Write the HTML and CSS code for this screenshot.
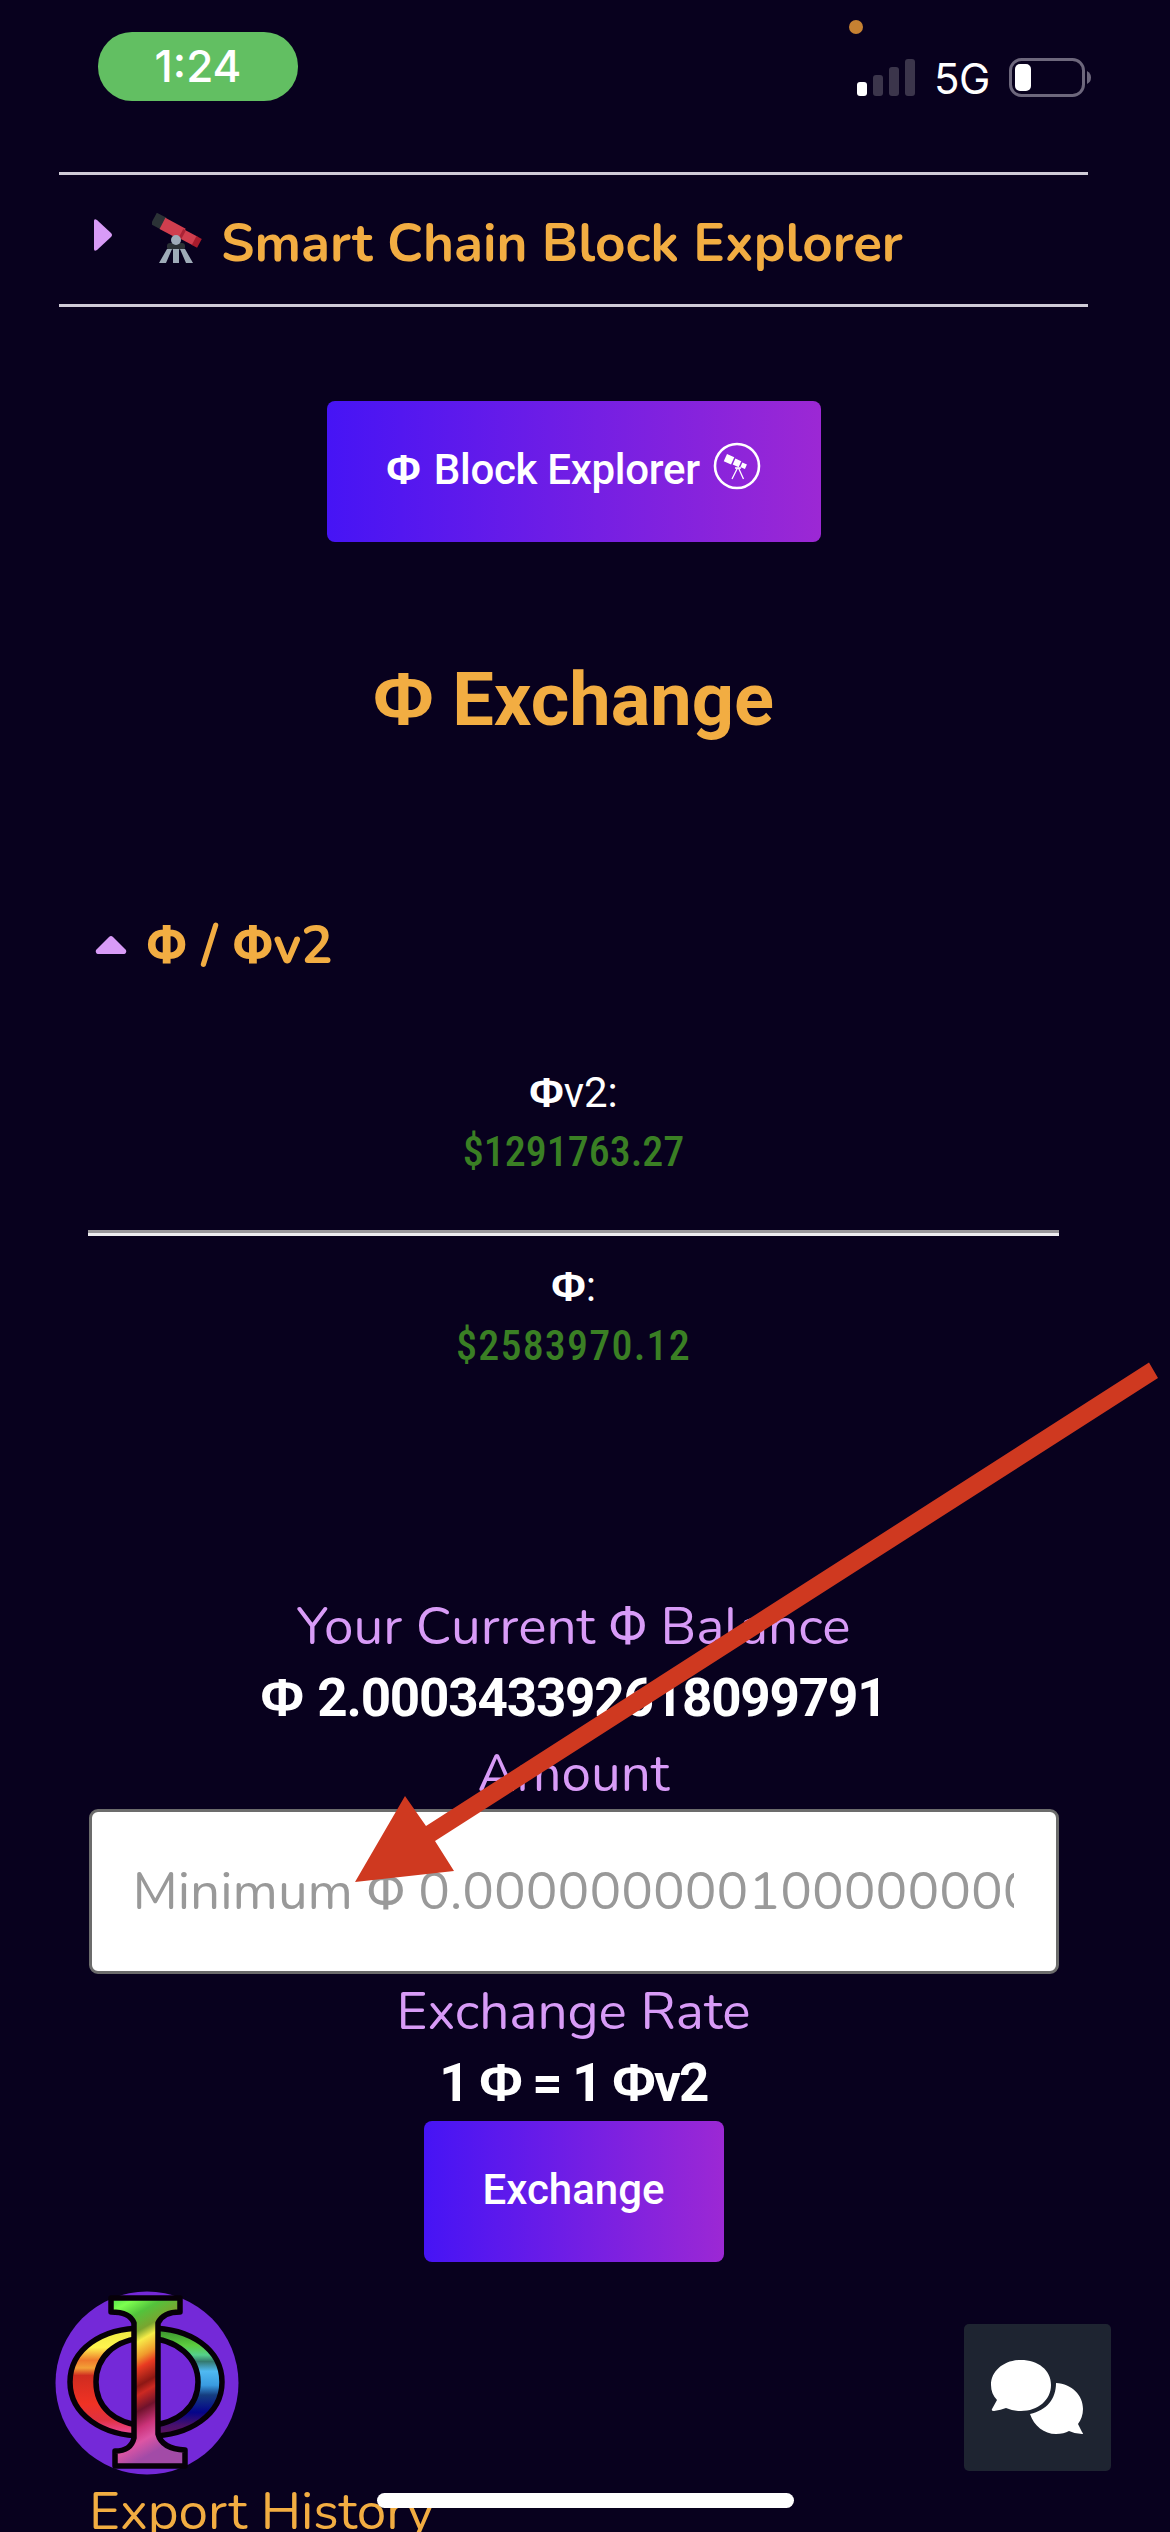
FILE: index.html
```html
<!DOCTYPE html>
<html lang="en">
<head>
<meta charset="utf-8">
<title>Φ Exchange</title>
<link rel="stylesheet" href="styles.css">
</head>
<body>
<div class="screen">
  <header class="status">
    <div class="time">1:24</div>
    <div class="indicators">
      <i class="mic"></i>
      <svg class="signal" width="58" height="38" viewBox="0 0 58 38">
        <rect x="0" y="23" width="10" height="14" rx="3" fill="#fff"/>
        <g fill="#3b354b"><rect x="16" y="16" width="10" height="21" rx="3"/><rect x="32" y="8" width="10" height="29" rx="3"/><rect x="48" y="0" width="10" height="37" rx="3"/></g>
      </svg>
      <span class="network">5G</span>
      <svg class="battery" width="83" height="40" viewBox="0 0 83 40">
        <rect x="1.5" y="1.5" width="73" height="36" rx="11" fill="none" stroke="#6d677c" stroke-width="3"/>
        <rect x="6" y="6" width="16" height="27" rx="5" fill="#fff"/>
        <path d="M78 13q4 2 4 6.500t-4 6.500z" fill="#6d677c"/>
      </svg>
    </div>
  </header>

  <main>
    <section class="accordion">
      <svg class="caret" width="20" height="34" viewBox="0 0 20 34"><path d="M1 3Q1 0 4 2L18 15Q20 17 18 19L4 32Q1 34 1 31Z" fill="#d89bf7"/></svg>
      <svg class="scope" width="52" height="52" viewBox="0 0 52 52">
        <g transform="translate(2 6) rotate(28)">
          <rect x="0" y="-6" width="11" height="13" fill="#2b3236"/>
          <rect x="10" y="-5.500" width="23" height="12.500" fill="#d03e4e"/>
          <rect x="32" y="-4" width="15" height="10" fill="#d03e4e"/>
          <rect x="31" y="-4" width="3" height="10" fill="#a92335"/>
          <rect x="46" y="-4" width="6" height="10" fill="#a71b2c"/>
        </g>
        <rect x="15" y="31" width="18" height="7" rx="3" fill="#2b3236"/>
        <circle cx="24" cy="28" r="5" fill="#9eabb8"/>
        <path d="M15 37h5l-6 14H7zM21 37h6v14h-6zM28 37h5l8 14h-7z" fill="#9eabb8"/>
      </svg>
      <h2>Smart Chain Block Explorer</h2>
    </section>

    <button class="btn btn-explorer"><b>Φ</b><span>Block Explorer</span>
      <svg width="48" height="48" viewBox="0 0 48 48">
        <circle cx="24" cy="24" r="22" fill="none" stroke="#fff" stroke-width="2.600"/>
        <g transform="translate(14 12) rotate(24)" fill="#fff"><rect width="8" height="8"/><rect x="9.500" y=".8" width="6.500" height="6.500"/><rect x="17.500" y="1.500" width="5" height="5"/></g>
        <path d="M22 26h6M24.500 26l-5.500 11M25.500 26l5 11" stroke="#fff" stroke-width="1.300" fill="none"/>
      </svg>
    </button>

    <h1><b>Φ</b> Exchange</h1>

    <div class="panel">
      <div class="pair">
        <svg width="32" height="18" viewBox="0 0 32 18"><path d="M14 1Q16 -1 18 1L31 14Q32 18 28 18H4Q0 18 1 14Z" fill="#d89bf7"/></svg>
        <h2>Φ / Φv2</h2>
      </div>
      <p class="price first"><b>Φ</b><span class="version">v2:</span></p>
      <p class="price usd">$1291763.27</p>
      <hr>
      <p class="price"><b>Φ</b>:</p>
      <p class="price usd wide">$2583970.12</p>

      <p class="label balance">Your Current Φ Balance</p>
      <p class="value"><b>Φ</b> <span class="digits">2.000343392618099791</span></p>
      <p class="label amount">Amount</p>
      <input type="text" placeholder="Minimum Φ 0.000000000100000000" aria-label="Amount">
      <p class="label rate">Exchange Rate</p>
      <p class="value ratio">1 <b>Φ</b> = 1 <b>Φ</b>v2</p>
      <button class="btn btn-exchange">Exchange</button>
      <p class="export">Export History</p>
    </div>
  </main>

  <svg class="logo" width="190" height="190" viewBox="0 0 190 190">
    <defs>
      <linearGradient id="stem" x1="0" y1="0" x2="0.250" y2="1"><stop offset="0" stop-color="#4fe04b"/><stop offset=".08" stop-color="#7cff4f"/><stop offset=".17" stop-color="#53c33c"/><stop offset=".27" stop-color="#7aa52f"/><stop offset=".33" stop-color="#f7ec49"/><stop offset=".42" stop-color="#f09a2c"/><stop offset=".48" stop-color="#e93b22"/><stop offset=".58" stop-color="#8d1714"/><stop offset=".63" stop-color="#cc2922"/><stop offset=".72" stop-color="#70122c"/><stop offset=".82" stop-color="#cb3379"/><stop offset=".9" stop-color="#dd55a4"/><stop offset="1" stop-color="#a24ba7"/></linearGradient>
      <linearGradient id="left" x1="0" y1="0" x2="0" y2="1"><stop offset="0" stop-color="#ece942"/><stop offset=".18" stop-color="#fff44d"/><stop offset=".3" stop-color="#ef792c"/><stop offset=".37" stop-color="#f3a137"/><stop offset=".44" stop-color="#cf2c20"/><stop offset=".7" stop-color="#f03224"/><stop offset=".85" stop-color="#e03140"/><stop offset="1" stop-color="#ee4cac"/></linearGradient>
      <linearGradient id="right" x1="0" y1="0" x2="0" y2="1"><stop offset="0" stop-color="#358a2b"/><stop offset=".16" stop-color="#5ccc3e"/><stop offset=".25" stop-color="#55d18b"/><stop offset=".31" stop-color="#347a70"/><stop offset=".4" stop-color="#50b9f2"/><stop offset=".53" stop-color="#399be0"/><stop offset=".62" stop-color="#153e80"/><stop offset=".78" stop-color="#04048a"/><stop offset=".9" stop-color="#48106b"/><stop offset="1" stop-color="#60135d"/></linearGradient>
    </defs>
    <circle cx="95" cy="95" r="91.500" fill="#7429d8"/>
    <g fill-rule="evenodd" stroke="#060008" stroke-width="5.500" stroke-linejoin="round">
      <path d="M94 40C49 39 18 62 18 94S50 149 94 148V138C61 136 44 118 44 94S62 51 94 50Z" fill="url(#left)"/>
      <path d="M94 40C139 39 170 62 170 94S138 149 94 148V138C127 136 146 118 146 94S126 51 94 50Z" fill="url(#right)"/>
      <path d="M59 10H128V24Q111 24 106 35V146Q110 161 133 162V178H63V163Q79 163 82 150V35Q78 24 59 24Z" fill="url(#stem)"/>
    </g>
  </svg>

  <div class="chat">
    <svg width="94" height="76" viewBox="0 0 94 76" fill="#fff">
      <path d="M30 1C13 1 0 12 0 26c0 6 2 11 6 15L1 50q-1 2 2 2 7-1 12-3 7 3 15 3c17 0 30-11 30-26S47 1 30 1Z"/>
      <path d="M65 24c0 16-9 27-26 31 4 12 14 20 26 20q8 0 13-3 6 3 13 3 2 0 0-2l-4-8c3-4 5-9 5-15 0-14-11-25-27-26Z"/>
    </svg>
  </div>
  <div class="home"></div>
  <svg class="arrow" width="1170" height="2532" viewBox="0 0 1170 2532"><path d="M355 1882L405 1796L426 1826L1149 1362.500L1158 1378L435 1841L454 1871Z" fill="#cf3920"/></svg>
</div>
</body>
</html>
```
FILE: styles.css
```css
* { box-sizing: border-box; }
body { margin: 0; background: #08011e; }
h1, h2, p { margin: 0; white-space: nowrap; }

.screen {
  position: relative;
  width: 1170px;
  height: 2532px;
  overflow: hidden;
  background: #08011e;
  color: #fff;
  font-family: Nunito, Roboto, sans-serif;
}

.status { height: 172px; display: flex; justify-content: space-between; padding: 32px 78px 0 98px; }
.time {
  width: 200px; height: 69px; border-radius: 34px; background: #62bf62;
  font: 500 44px/69px Inter, sans-serif; text-align: center; letter-spacing: 0;
}
.indicators { position: relative; display: flex; align-items: flex-start; }
.mic { position: absolute; left: -8px; top: -12px; width: 14px; height: 14px; border-radius: 50%; background: #c68132; }
.signal { margin-top: 27px; }
.network { margin: 21px 20px 0 19px; width: 55px; font: 400 42px/52px Inter, sans-serif; letter-spacing: -0.5px; }
.battery { margin-top: 26px; }

main { width: 1029px; margin-left: 59px; display: flex; flex-direction: column; align-items: center; }

.accordion {
  width: 100%; height: 135px; padding-left: 34px;
  border-top: 3px solid #cfcbd6; border-bottom: 3px solid #cfcbd6;
  display: flex; align-items: flex-start;
}
.caret { margin-top: 43px; }
.scope { margin: 37px 0 0 39px; }
h2 { color: #f2ad42; font-size: 53px; font-weight: 700; }
.accordion h2 { margin-left: 17px; line-height: 137px; }

.btn {
  height: 141px; padding: 0 0 4px; border: 0; border-radius: 8px;
  background: linear-gradient(90deg, #4614f5, #9c28d4); color: #fff;
  font: 500 42px/137px Roboto, sans-serif;
  display: flex; justify-content: center;
}
.btn b, h1 b, .price b, .value b { font-family: "Liberation Sans", sans-serif; font-weight: 700; }
.btn-explorer { width: 494px; margin-top: 94px; gap: 13px; }
.btn-explorer span { letter-spacing: -0.3px; }
.btn-explorer svg { margin-top: 41px; }

h1 { margin-top: 108px; color: #f2ad42; font: 700 74px/100px Roboto, sans-serif; }

.panel { width: 971px; display: flex; flex-direction: column; align-items: center; text-align: center; }
.pair { width: 100%; margin-top: 161px; height: 70px; padding-left: 7px; display: flex; gap: 19px; }
.pair svg { margin-top: 25px; }
.pair h2 { line-height: 70px; }

.price { font: 400 42px/59px "Roboto Condensed", Roboto, sans-serif; }
.price.first { margin-top: 82px; }
.version { font-family: Roboto, sans-serif; }
.usd { color: #3a7f24; font-weight: 500; }
.usd.wide { letter-spacing: 1.2px; }
hr { width: 100%; height: 6px; margin: 49px 0 21px; border: 0; border-top: 3px solid #9a989b; background: #eeedef; }

.label { color: #d89bf7; font-size: 53px; font-weight: 400; line-height: 70px; }
.balance { margin-top: 217px; }
.amount { margin-top: 6px; }
.rate { margin-top: 3px; }
.value { margin-top: 1px; font: 700 53px/70px Roboto, sans-serif; }
.digits { letter-spacing: -1.2px; }
.ratio { letter-spacing: -1.8px; }

input {
  width: 970px; height: 165px; padding: 0 42px 0 41px; border: 3px solid #6c6c6c; border-radius: 9px;
  background: #fff; font: 400 53px/1.4 Nunito, Roboto, sans-serif;
}
input::placeholder { color: #999; opacity: 1; }

.btn-exchange { width: 300px; margin-top: 3px; }
.export { width: 100%; margin-top: 215px; padding-left: 1px; color: #f2ad42; font-size: 53px; line-height: 70px; text-align: left; }

.logo { position: absolute; left: 52px; top: 2288px; }
.chat {
  position: absolute; left: 964px; top: 2324px; width: 147px; height: 147px;
  border-radius: 5px; background: #1e2431; padding: 35px 0 0 27px;
}
.home { position: absolute; left: 377px; top: 2493px; width: 417px; height: 15px; border-radius: 8px; background: #fff; }
.arrow { position: absolute; left: 0; top: 0; }
```
